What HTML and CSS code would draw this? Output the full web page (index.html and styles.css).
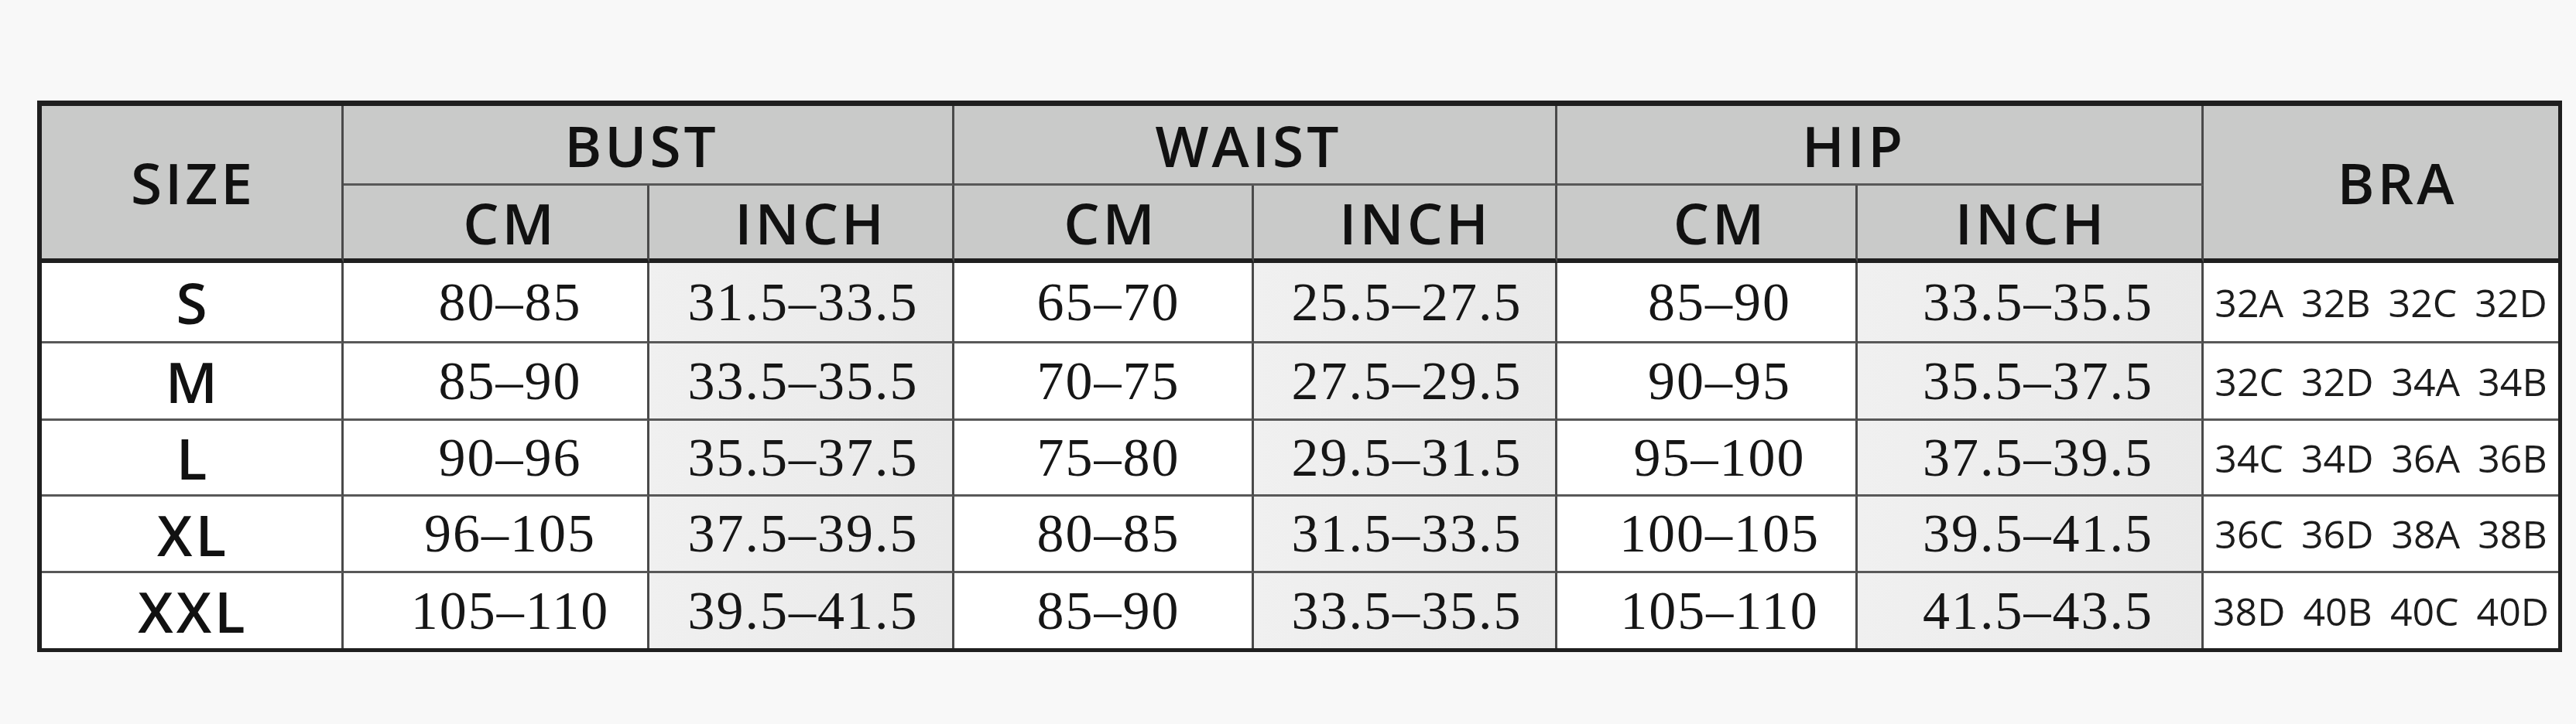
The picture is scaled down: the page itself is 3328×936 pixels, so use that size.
FILE: index.html
```html
<!DOCTYPE html>
<html lang="en">
<head>
<meta charset="utf-8">
<title>Size Chart</title>
<link rel="stylesheet" href="styles.css">
</head>
<body>
<main class="page">
  <table class="chart">
    <colgroup>
      <col class="c-size">
      <col class="c-bcm">
      <col class="c-bin">
      <col class="c-wcm">
      <col class="c-win">
      <col class="c-hcm">
      <col class="c-hin">
      <col class="c-bra">
    </colgroup>
    <thead>
      <tr class="h1">
        <th rowspan="2" class="hd size-h">SIZE</th>
        <th colspan="2" class="hd bust">BUST</th>
        <th colspan="2" class="hd waist">WAIST</th>
        <th colspan="2" class="hd hip">HIP</th>
        <th rowspan="2" class="hd bra-h last">BRA</th>
      </tr>
      <tr class="h2">
        <th class="hd sub s-bcm">CM</th>
        <th class="hd sub s-bin">INCH</th>
        <th class="hd sub s-wcm">CM</th>
        <th class="hd sub s-win">INCH</th>
        <th class="hd sub s-hcm">CM</th>
        <th class="hd sub s-hin">INCH</th>
      </tr>
    </thead>
    <tbody>
      <tr class="r1">
        <td class="sz">S</td>
        <td class="num bcm">80–85</td>
        <td class="num inch bin">31.5–33.5</td>
        <td class="num wcm">65–70</td>
        <td class="num inch win">25.5–27.5</td>
        <td class="num hcm">85–90</td>
        <td class="num inch hin">33.5–35.5</td>
        <td class="bra last">32A 32B 32C 32D</td>
      </tr>
      <tr class="r2">
        <td class="sz">M</td>
        <td class="num bcm">85–90</td>
        <td class="num inch bin">33.5–35.5</td>
        <td class="num wcm">70–75</td>
        <td class="num inch win">27.5–29.5</td>
        <td class="num hcm">90–95</td>
        <td class="num inch hin">35.5–37.5</td>
        <td class="bra last">32C 32D 34A 34B</td>
      </tr>
      <tr class="r3">
        <td class="sz">L</td>
        <td class="num bcm">90–96</td>
        <td class="num inch bin">35.5–37.5</td>
        <td class="num wcm">75–80</td>
        <td class="num inch win">29.5–31.5</td>
        <td class="num hcm">95–100</td>
        <td class="num inch hin">37.5–39.5</td>
        <td class="bra last">34C 34D 36A 36B</td>
      </tr>
      <tr class="r4">
        <td class="sz">XL</td>
        <td class="num bcm">96–105</td>
        <td class="num inch bin">37.5–39.5</td>
        <td class="num wcm">80–85</td>
        <td class="num inch win">31.5–33.5</td>
        <td class="num hcm">100–105</td>
        <td class="num inch hin">39.5–41.5</td>
        <td class="bra last">36C 36D 38A 38B</td>
      </tr>
      <tr class="r5">
        <td class="sz">XXL</td>
        <td class="num bcm">105–110</td>
        <td class="num inch bin">39.5–41.5</td>
        <td class="num wcm">85–90</td>
        <td class="num inch win">33.5–35.5</td>
        <td class="num hcm">105–110</td>
        <td class="num inch hin">41.5–43.5</td>
        <td class="bra last">38D 40B 40C 40D</td>
      </tr>
    </tbody>
  </table>
</main>
</body>
</html>
```
FILE: styles.css
```css
html, body {
  margin: 0;
  padding: 0;
  background: #f8f8f8;
}

.page {
  padding: 130px 0 0 48px;
  height: 806px;
}

.chart {
  table-layout: fixed;
  border-collapse: separate;
  border-spacing: 0;
  width: 3262px;
  border-style: solid;
  border-color: #1f1f1f;
  border-width: 7px 5px 5px 6px;
  background: #ffffff;
}

.c-size { width: 390px; }
.c-bcm  { width: 395px; }
.c-bin  { width: 394px; }
.c-wcm  { width: 387px; }
.c-win  { width: 392px; }
.c-hcm  { width: 388px; }
.c-hin  { width: 447px; }
.c-bra  { width: 458px; }

.chart th,
.chart td {
  padding: 0;
  border-right: 3px solid #4a4a4a;
  border-bottom: 3px solid #585858;
  text-align: center;
  vertical-align: middle;
  line-height: 1;
  white-space: nowrap;
}

.chart .last { border-right: none; }

.chart .r5 td { border-bottom: none; }

/* header */
.chart .hd {
  background: #c9cac9;
  color: #111111;
  font-family: "Open Sans", "Noto Sans", sans-serif;
  font-weight: 600;
  font-size: 73px;
  letter-spacing: 4px;
}

.h1 { height: 103px; }
.h2 { height: 100px; }

.chart .size-h,
.chart .bra-h,
.chart .h2 th {
  border-bottom: 6px solid #1f1f1f;
}

.chart .size-h { padding-left: 4px; }
.chart .bra-h  { padding-left: 42px; }
.chart .bust   { padding-right: 16px; }
.chart .waist  { padding-right: 16px; }
.chart .hip    { padding-right: 66px; }

.chart .s-bcm { padding-left: 38px; }
.chart .s-bin { padding-left: 26px; }
.chart .s-wcm { padding-left: 20px; }
.chart .s-win { padding-left: 28px; }
.chart .s-hcm { padding-left: 36px; }
.chart .s-hin { padding-left: 4px; }

/* body rows */
.r1 { height: 104px; }
.r2 { height: 100px; }
.r3 { height: 98px; }
.r4 { height: 99px; }
.r5 { height: 97px; }

.chart .sz {
  background: #ffffff;
  color: #111111;
  font-family: "Open Sans", "Noto Sans", sans-serif;
  font-weight: 600;
  font-size: 73px;
  letter-spacing: 4px;
  padding-left: 4px;
}

.chart .num {
  background: #ffffff;
  color: #161616;
  font-family: "Liberation Serif", "Times New Roman", serif;
  font-size: 70px;
  letter-spacing: 2px;
}

.chart .num.inch {
  background: linear-gradient(90deg, #f0f0f0 0%, #e9e9e9 100%);
}

.chart .bcm { padding-left: 38px; }
.chart .wcm { padding-left: 14px; }
.chart .hcm { padding-left: 34px; }
.chart .bin { padding-left: 6px; }
.chart .win { padding-left: 6px; }
.chart .hin { padding-left: 22px; }

.chart .bra {
  background: #ffffff;
  color: #1c1c1c;
  font-family: "Open Sans", "Noto Sans", sans-serif;
  font-size: 50px;
  word-spacing: 10px;
}
```
